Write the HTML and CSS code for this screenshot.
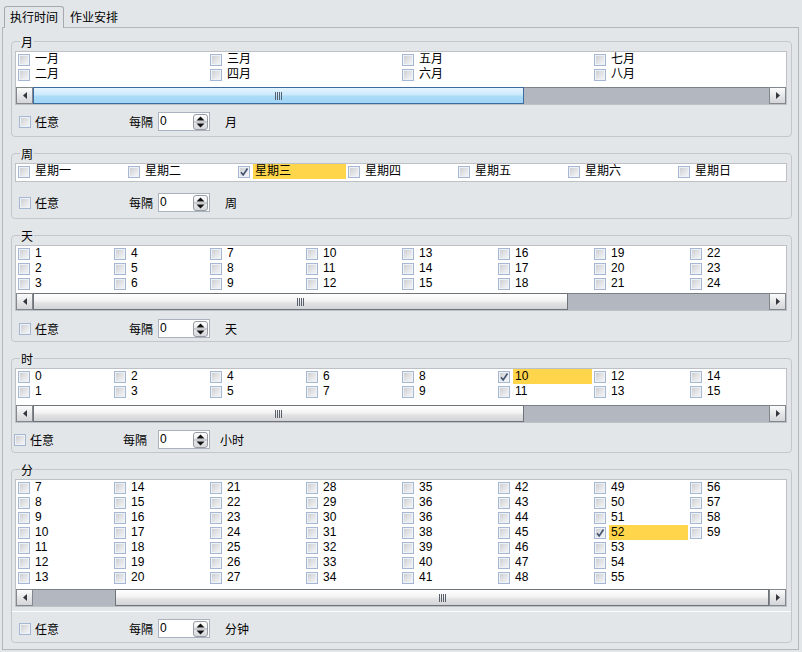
FILE: index.html
```html
<!DOCTYPE html>
<html lang="zh-CN">
<head>
<meta charset="utf-8">
<title>执行时间</title>
<link rel="stylesheet" href="styles.css">
</head>
<body>
<div class="tabctl">
  <div class="tabs">
    <div class="tab active">执行时间</div>
    <div class="tab">作业安排</div>
  </div>
  <div class="panel">

    <fieldset class="grp g-mon">
      <legend>月</legend>
      <div class="lst">
        <div class="rows m">
          <div class="it"><i class="cb"></i><span class="lb">一月</span></div>
          <div class="it"><i class="cb"></i><span class="lb">二月</span></div>
          <div class="it"><i class="cb"></i><span class="lb">三月</span></div>
          <div class="it"><i class="cb"></i><span class="lb">四月</span></div>
          <div class="it"><i class="cb"></i><span class="lb">五月</span></div>
          <div class="it"><i class="cb"></i><span class="lb">六月</span></div>
          <div class="it"><i class="cb"></i><span class="lb">七月</span></div>
          <div class="it"><i class="cb"></i><span class="lb">八月</span></div>
          <div class="it"><i class="cb"></i></div>
          <div class="it"><i class="cb"></i></div>
        </div>
        <div class="sb">
          <span class="sbb"><svg width="4" height="7" viewBox="0 0 4 7"><path d="M4 0V7L0 3.5Z" fill="#33373d"/></svg></span>
          <div class="track"><span class="thumb hot" style="width:491px"><i class="grip"></i></span></div>
          <span class="sbb"><svg width="4" height="7" viewBox="0 0 4 7"><path d="M0 0V7L4 3.5Z" fill="#33373d"/></svg></span>
        </div>
      </div>
      <div class="opt">
        <label class="any"><i class="cb"></i>任意</label>
        <span class="every">每隔</span>
        <span class="spin"><span class="val">0</span><span class="spinbtn"><svg width="13" height="14" viewBox="0 0 13 14"><path d="M2.5 5.5h8L6.5 1.5Z M2.5 8.5h8l-4 4Z" fill="#111"/><path d="M0 7h13" stroke="#a9aeb5"/></svg></span></span>
        <span class="unit">月</span>
      </div>
    </fieldset>

    <fieldset class="grp g-week">
      <legend>周</legend>
      <div class="lst">
        <div class="rows w">
          <div class="it"><i class="cb"></i><span class="lb">星期一</span></div>
          <div class="it"><i class="cb"></i><span class="lb">星期二</span></div>
          <div class="it"><i class="cb on"><svg width="10" height="10" viewBox="0 0 10 10"><path d="M2 5.2L4.2 8L8.5 1.5" fill="none" stroke="#3f5171" stroke-width="1.6"/></svg></i><span class="lb sel">星期三</span></div>
          <div class="it"><i class="cb"></i><span class="lb">星期四</span></div>
          <div class="it"><i class="cb"></i><span class="lb">星期五</span></div>
          <div class="it"><i class="cb"></i><span class="lb">星期六</span></div>
          <div class="it"><i class="cb"></i><span class="lb">星期日</span></div>
        </div>
      </div>
      <div class="opt">
        <label class="any"><i class="cb"></i>任意</label>
        <span class="every">每隔</span>
        <span class="spin"><span class="val">0</span><span class="spinbtn"><svg width="13" height="14" viewBox="0 0 13 14"><path d="M2.5 5.5h8L6.5 1.5Z M2.5 8.5h8l-4 4Z" fill="#111"/><path d="M0 7h13" stroke="#a9aeb5"/></svg></span></span>
        <span class="unit">周</span>
      </div>
    </fieldset>

    <fieldset class="grp g-day">
      <legend>天</legend>
      <div class="lst">
        <div class="rows d">
          <div class="it"><i class="cb"></i><span class="lb">1</span></div>
          <div class="it"><i class="cb"></i><span class="lb">2</span></div>
          <div class="it"><i class="cb"></i><span class="lb">3</span></div>
          <div class="it"><i class="cb"></i><span class="lb">4</span></div>
          <div class="it"><i class="cb"></i><span class="lb">5</span></div>
          <div class="it"><i class="cb"></i><span class="lb">6</span></div>
          <div class="it"><i class="cb"></i><span class="lb">7</span></div>
          <div class="it"><i class="cb"></i><span class="lb">8</span></div>
          <div class="it"><i class="cb"></i><span class="lb">9</span></div>
          <div class="it"><i class="cb"></i><span class="lb">10</span></div>
          <div class="it"><i class="cb"></i><span class="lb">11</span></div>
          <div class="it"><i class="cb"></i><span class="lb">12</span></div>
          <div class="it"><i class="cb"></i><span class="lb">13</span></div>
          <div class="it"><i class="cb"></i><span class="lb">14</span></div>
          <div class="it"><i class="cb"></i><span class="lb">15</span></div>
          <div class="it"><i class="cb"></i><span class="lb">16</span></div>
          <div class="it"><i class="cb"></i><span class="lb">17</span></div>
          <div class="it"><i class="cb"></i><span class="lb">18</span></div>
          <div class="it"><i class="cb"></i><span class="lb">19</span></div>
          <div class="it"><i class="cb"></i><span class="lb">20</span></div>
          <div class="it"><i class="cb"></i><span class="lb">21</span></div>
          <div class="it"><i class="cb"></i><span class="lb">22</span></div>
          <div class="it"><i class="cb"></i><span class="lb">23</span></div>
          <div class="it"><i class="cb"></i><span class="lb">24</span></div>
          <div class="it"><i class="cb"></i></div>
          <div class="it"><i class="cb"></i></div>
          <div class="it"><i class="cb"></i></div>
        </div>
        <div class="sb">
          <span class="sbb"><svg width="4" height="7" viewBox="0 0 4 7"><path d="M4 0V7L0 3.5Z" fill="#33373d"/></svg></span>
          <div class="track"><span class="thumb" style="width:535px"><i class="grip"></i></span></div>
          <span class="sbb"><svg width="4" height="7" viewBox="0 0 4 7"><path d="M0 0V7L4 3.5Z" fill="#33373d"/></svg></span>
        </div>
      </div>
      <div class="opt">
        <label class="any"><i class="cb"></i>任意</label>
        <span class="every">每隔</span>
        <span class="spin"><span class="val">0</span><span class="spinbtn"><svg width="13" height="14" viewBox="0 0 13 14"><path d="M2.5 5.5h8L6.5 1.5Z M2.5 8.5h8l-4 4Z" fill="#111"/><path d="M0 7h13" stroke="#a9aeb5"/></svg></span></span>
        <span class="unit">天</span>
      </div>
    </fieldset>

    <fieldset class="grp g-hour">
      <legend>时</legend>
      <div class="lst">
        <div class="rows h">
          <div class="it"><i class="cb"></i><span class="lb">0</span></div>
          <div class="it"><i class="cb"></i><span class="lb">1</span></div>
          <div class="it"><i class="cb"></i><span class="lb">2</span></div>
          <div class="it"><i class="cb"></i><span class="lb">3</span></div>
          <div class="it"><i class="cb"></i><span class="lb">4</span></div>
          <div class="it"><i class="cb"></i><span class="lb">5</span></div>
          <div class="it"><i class="cb"></i><span class="lb">6</span></div>
          <div class="it"><i class="cb"></i><span class="lb">7</span></div>
          <div class="it"><i class="cb"></i><span class="lb">8</span></div>
          <div class="it"><i class="cb"></i><span class="lb">9</span></div>
          <div class="it"><i class="cb on"><svg width="10" height="10" viewBox="0 0 10 10"><path d="M2 5.2L4.2 8L8.5 1.5" fill="none" stroke="#3f5171" stroke-width="1.6"/></svg></i><span class="lb sel">10</span></div>
          <div class="it"><i class="cb"></i><span class="lb">11</span></div>
          <div class="it"><i class="cb"></i><span class="lb">12</span></div>
          <div class="it"><i class="cb"></i><span class="lb">13</span></div>
          <div class="it"><i class="cb"></i><span class="lb">14</span></div>
          <div class="it"><i class="cb"></i><span class="lb">15</span></div>
          <div class="it"><i class="cb"></i></div>
          <div class="it"><i class="cb"></i></div>
        </div>
        <div class="sb">
          <span class="sbb"><svg width="4" height="7" viewBox="0 0 4 7"><path d="M4 0V7L0 3.5Z" fill="#33373d"/></svg></span>
          <div class="track"><span class="thumb" style="width:491px"><i class="grip"></i></span></div>
          <span class="sbb"><svg width="4" height="7" viewBox="0 0 4 7"><path d="M0 0V7L4 3.5Z" fill="#33373d"/></svg></span>
        </div>
      </div>
      <div class="opt sh">
        <label class="any"><i class="cb"></i>任意</label>
        <span class="every">每隔</span>
        <span class="spin"><span class="val">0</span><span class="spinbtn"><svg width="13" height="14" viewBox="0 0 13 14"><path d="M2.5 5.5h8L6.5 1.5Z M2.5 8.5h8l-4 4Z" fill="#111"/><path d="M0 7h13" stroke="#a9aeb5"/></svg></span></span>
        <span class="unit">小时</span>
      </div>
    </fieldset>

    <fieldset class="grp g-min">
      <legend>分</legend>
      <div class="lst">
        <div class="rows n">
          <div class="it"><i class="cb"></i><span class="lb">7</span></div>
          <div class="it"><i class="cb"></i><span class="lb">8</span></div>
          <div class="it"><i class="cb"></i><span class="lb">9</span></div>
          <div class="it"><i class="cb"></i><span class="lb">10</span></div>
          <div class="it"><i class="cb"></i><span class="lb">11</span></div>
          <div class="it"><i class="cb"></i><span class="lb">12</span></div>
          <div class="it"><i class="cb"></i><span class="lb">13</span></div>
          <div class="it"><i class="cb"></i><span class="lb">14</span></div>
          <div class="it"><i class="cb"></i><span class="lb">15</span></div>
          <div class="it"><i class="cb"></i><span class="lb">16</span></div>
          <div class="it"><i class="cb"></i><span class="lb">17</span></div>
          <div class="it"><i class="cb"></i><span class="lb">18</span></div>
          <div class="it"><i class="cb"></i><span class="lb">19</span></div>
          <div class="it"><i class="cb"></i><span class="lb">20</span></div>
          <div class="it"><i class="cb"></i><span class="lb">21</span></div>
          <div class="it"><i class="cb"></i><span class="lb">22</span></div>
          <div class="it"><i class="cb"></i><span class="lb">23</span></div>
          <div class="it"><i class="cb"></i><span class="lb">24</span></div>
          <div class="it"><i class="cb"></i><span class="lb">25</span></div>
          <div class="it"><i class="cb"></i><span class="lb">26</span></div>
          <div class="it"><i class="cb"></i><span class="lb">27</span></div>
          <div class="it"><i class="cb"></i><span class="lb">28</span></div>
          <div class="it"><i class="cb"></i><span class="lb">29</span></div>
          <div class="it"><i class="cb"></i><span class="lb">30</span></div>
          <div class="it"><i class="cb"></i><span class="lb">31</span></div>
          <div class="it"><i class="cb"></i><span class="lb">32</span></div>
          <div class="it"><i class="cb"></i><span class="lb">33</span></div>
          <div class="it"><i class="cb"></i><span class="lb">34</span></div>
          <div class="it"><i class="cb"></i><span class="lb">35</span></div>
          <div class="it"><i class="cb"></i><span class="lb">36</span></div>
          <div class="it"><i class="cb"></i><span class="lb">36</span></div>
          <div class="it"><i class="cb"></i><span class="lb">38</span></div>
          <div class="it"><i class="cb"></i><span class="lb">39</span></div>
          <div class="it"><i class="cb"></i><span class="lb">40</span></div>
          <div class="it"><i class="cb"></i><span class="lb">41</span></div>
          <div class="it"><i class="cb"></i><span class="lb">42</span></div>
          <div class="it"><i class="cb"></i><span class="lb">43</span></div>
          <div class="it"><i class="cb"></i><span class="lb">44</span></div>
          <div class="it"><i class="cb"></i><span class="lb">45</span></div>
          <div class="it"><i class="cb"></i><span class="lb">46</span></div>
          <div class="it"><i class="cb"></i><span class="lb">47</span></div>
          <div class="it"><i class="cb"></i><span class="lb">48</span></div>
          <div class="it"><i class="cb"></i><span class="lb">49</span></div>
          <div class="it"><i class="cb"></i><span class="lb">50</span></div>
          <div class="it"><i class="cb"></i><span class="lb">51</span></div>
          <div class="it"><i class="cb on"><svg width="10" height="10" viewBox="0 0 10 10"><path d="M2 5.2L4.2 8L8.5 1.5" fill="none" stroke="#3f5171" stroke-width="1.6"/></svg></i><span class="lb sel">52</span></div>
          <div class="it"><i class="cb"></i><span class="lb">53</span></div>
          <div class="it"><i class="cb"></i><span class="lb">54</span></div>
          <div class="it"><i class="cb"></i><span class="lb">55</span></div>
          <div class="it"><i class="cb"></i><span class="lb">56</span></div>
          <div class="it"><i class="cb"></i><span class="lb">57</span></div>
          <div class="it"><i class="cb"></i><span class="lb">58</span></div>
          <div class="it"><i class="cb"></i><span class="lb">59</span></div>
        </div>
        <div class="sb">
          <span class="sbb"><svg width="4" height="7" viewBox="0 0 4 7"><path d="M4 0V7L0 3.5Z" fill="#33373d"/></svg></span>
          <div class="track"><span class="thumb" style="width:654px;margin-left:82px"><i class="grip"></i></span></div>
          <span class="sbb"><svg width="4" height="7" viewBox="0 0 4 7"><path d="M0 0V7L4 3.5Z" fill="#33373d"/></svg></span>
        </div>
      </div>
      <div class="opt sep">
        <label class="any"><i class="cb"></i>任意</label>
        <span class="every">每隔</span>
        <span class="spin"><span class="val">0</span><span class="spinbtn"><svg width="13" height="14" viewBox="0 0 13 14"><path d="M2.5 5.5h8L6.5 1.5Z M2.5 8.5h8l-4 4Z" fill="#111"/><path d="M0 7h13" stroke="#a9aeb5"/></svg></span></span>
        <span class="unit">分钟</span>
      </div>
    </fieldset>

  </div>
</div>
</body>
</html>
```

FILE: styles.css
```css
* { box-sizing: border-box; }

body {
  margin: 0;
  background: #e3e6e9;
  color: #000;
  font: 12px/15px "Liberation Sans", "Noto Sans CJK SC", sans-serif;
}

.tabctl {
  margin: 6px 3px 2px 2px;
}

.tabs {
  display: flex;
  align-items: flex-start;
  height: 22px;
  border-bottom: 1px solid #b3b7bd;
}

.tab {
  height: 21px;
  line-height: 21px;
  padding: 0 6px;
  font-family: "Noto Sans CJK SC", sans-serif;
}

.tab.active {
  height: 22px;
  line-height: 20px;
  margin-left: 2px;
  padding: 0 5px;
  border: 1px solid #a6aab0;
  border-bottom: 0;
  border-radius: 3px 3px 0 0;
  background: #e3e6e9;
}

.panel {
  display: flex;
  flex-direction: column;
  gap: 9px;
  padding: 6px 6px 6px 8px;
  border: 1px solid #b3b7bd;
  border-top: 0;
}

.grp {
  margin: 0;
  min-width: 0;
  border: 1px solid #c3c7cd;
  border-radius: 4px;
  padding: 2px 4px 5px 3px;
}

.grp > legend {
  margin-left: 5px;
  padding: 0 1px;
  height: 15px;
  line-height: 15px;
  font-family: "Noto Sans CJK SC", sans-serif;
}

.lst {
  border: 1px solid #bcc1c8;
  background: #fff;
}

.rows {
  display: grid;
  grid-auto-flow: column;
  grid-auto-columns: 96px;
  align-content: start;
  overflow: hidden;
}
.rows.m { grid-template-rows: repeat(2, 15px); grid-auto-columns: 192px; height: 35px; }
.rows.w { grid-template-rows: 15px; grid-auto-columns: 110px; height: 17px; }
.rows.d { grid-template-rows: repeat(3, 15px); height: 47px; }
.rows.h { grid-template-rows: repeat(2, 15px); height: 36px; }
.rows.n { grid-template-rows: repeat(7, 15px); height: 109px; }

.it {
  display: flex;
  align-items: center;
  height: 15px;
  min-width: 0;
}
.it .cb { margin-left: 2px; }

.lb {
  flex: 1;
  height: 15px;
  margin-left: 3px;
  padding-left: 2px;
  line-height: 15px;
  white-space: nowrap;
}
.lb.sel { background: #ffd54c; }

.cb {
  display: inline-flex;
  align-items: center;
  justify-content: center;
  flex: none;
  width: 12px;
  height: 12px;
  border: 1px solid #a5b7d3;
  background: linear-gradient(135deg, #c9cacd 0%, #e2e3e5 50%, #f8f8f9 100%);
  box-shadow: inset 0 0 0 1px #eef1f5;
}
.cb svg { display: block; }

/* scrollbars */
.sb {
  display: flex;
  height: 17px;
  background: #b3b7bf;
  box-shadow: inset 0 1px 0 #7c8088;
}
.sbb {
  display: flex;
  align-items: center;
  justify-content: center;
  flex: none;
  width: 17px;
  height: 17px;
  border: 1px solid #83878e;
  background: linear-gradient(#fbfbfb, #e6e7e9 50%, #d3d5d8);
}
.track {
  flex: 1;
  display: flex;
}
.thumb {
  display: flex;
  align-items: center;
  justify-content: center;
  height: 17px;
  border: 1px solid #6f737a;
  background: linear-gradient(#ffffff, #f3f3f4 45%, #e2e2e4 60%, #d2d3d6);
}
.thumb.hot {
  border-color: #3d6b9e;
  background: linear-gradient(#e6f4fd, #cbe9fb 45%, #acdcf8 55%, #9fd5f5);
}
.grip {
  width: 7px;
  height: 8px;
  background: repeating-linear-gradient(to right, #59606b 0 1px, transparent 1px 2px);
}

/* option row */
.opt {
  display: flex;
  align-items: center;
  height: 19px;
  font-family: "Noto Sans CJK SC", sans-serif;
}
.g-mon { padding-bottom: 5px; }
.g-mon .opt { margin-top: 7px; }
.g-week { padding-bottom: 6px; }
.g-week .opt { margin-top: 11px; }
.g-day { padding-bottom: 3px; }
.g-day .opt { margin-top: 8px; }
.g-hour { padding-bottom: 3px; }
.g-hour .opt { margin-top: 7px; }
.g-min { padding-bottom: 4px; }

.opt.sep {
  height: auto;
  margin: 4px -4px 0 -3px;
  padding: 7px 4px 0 3px;
  border-top: 1px solid #fbfcfd;
}

.any {
  display: flex;
  align-items: center;
  width: 114px;
}
.any .cb { margin: 0 4px; }
.every { margin-right: 5px; }
.unit { margin-left: 15px; }

.opt.sh .any { width: 108px; }
.opt.sh .any .cb { margin-left: -1px; }
.opt.sh .every { margin-right: 11px; }
.opt.sh .unit { margin-left: 10px; }

.spin {
  display: flex;
  align-items: center;
  justify-content: space-between;
  width: 52px;
  height: 19px;
  padding: 0 1px;
  border: 1px solid #aab2bf;
  background: #fff;
  font-family: "Liberation Sans", sans-serif;
}
.spinbtn {
  display: flex;
  align-items: center;
  justify-content: center;
  width: 15px;
  height: 16px;
  border: 1px solid #979ca4;
  border-radius: 3px;
  background: linear-gradient(#fdfdfd, #e9eaec 50%, #d6d8db);
}
.spinbtn svg { display: block; }
```
